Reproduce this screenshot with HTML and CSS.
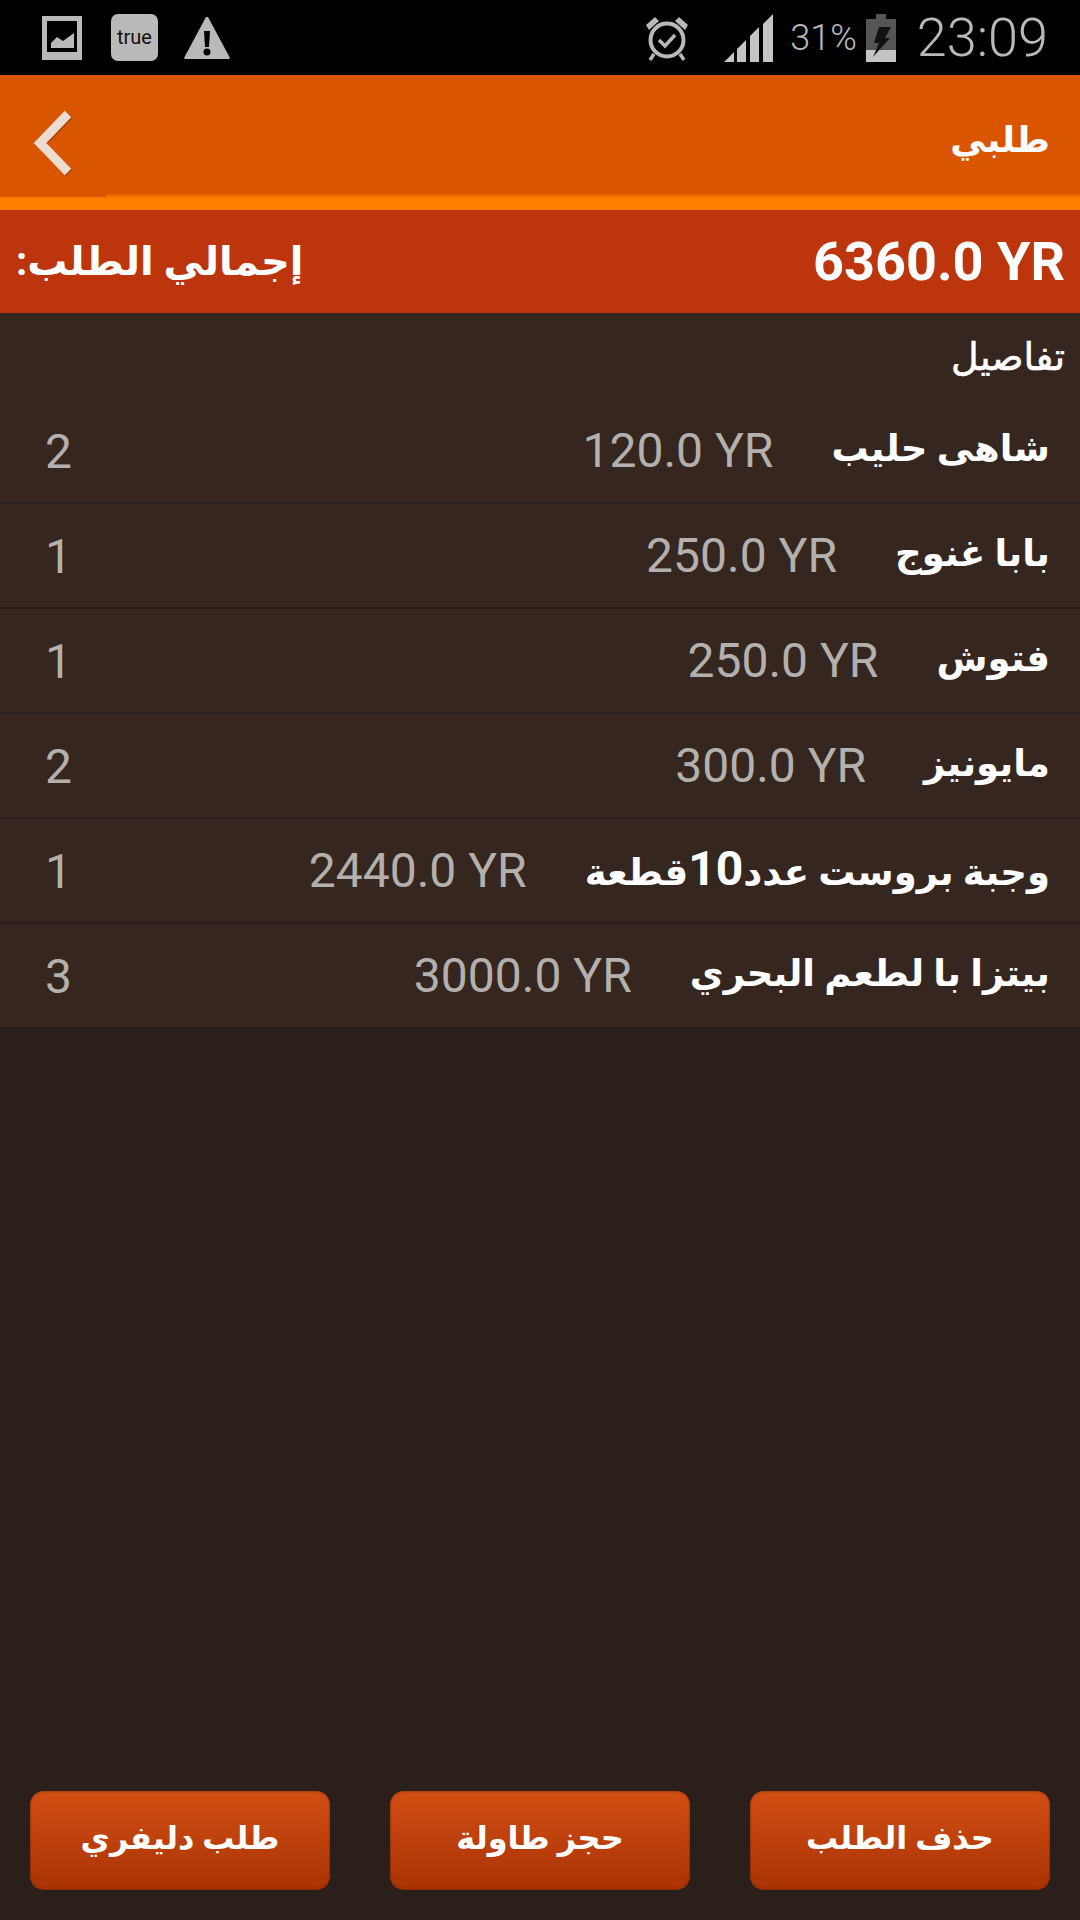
FILE: index.html
```html
<!DOCTYPE html>
<html lang="ar">
<head>
  <meta charset="UTF-8">
  <meta name="viewport" content="width=device-width, initial-scale=1.0">
  <title>طلبي</title>
  <link rel="stylesheet" href="styles.css">
</head>
<body>

  <div class="screen">
    <div class="status-bar">
      <div class="status-left">
        <svg class="icon-picture" width="40" height="44" viewBox="0 0 40 44">
          <path fill="#b9b9b9" fill-rule="evenodd" d="M0 0H40V44H0ZM5 5V36H35V5Z"/>
          <path fill="#b9b9b9" d="M9 32V27L15 21L21 25L32 17V32Z"/>
        </svg>
        <div class="true-badge">true</div>
        <svg class="icon-warning" width="48" height="44" viewBox="0 0 48 44">
          <path fill="#b9b9b9" d="M23 1H25L47 42L46 43H2L1 42Z"/>
          <path fill="#000" d="M21 15H27L26 31H22Z"/>
          <circle fill="#000" cx="24" cy="36" r="3.5"/>
        </svg>
      </div>
      <div class="status-right">
        <svg class="icon-alarm" width="46" height="48" viewBox="0 0 46 48">
          <circle cx="23" cy="26" r="16.5" fill="none" stroke="#b9b9b9" stroke-width="4"/>
          <path d="M15 26L21 32L31 21" fill="none" stroke="#b9b9b9" stroke-width="3.5"/>
          <path d="M2 11L11 3L15 7L5 16Z M44 11L35 3L31 7L41 16Z" fill="#b9b9b9"/>
          <path d="M10 40L6 46M36 40L40 46" stroke="#b9b9b9" stroke-width="3.5"/>
        </svg>
        <svg class="icon-signal" width="49" height="48" viewBox="0 0 49 48">
          <path fill="#c4c4c4" d="M0 48L10 38V48Z M13 35L22 26V48H13Z M26 22L35 13V48H26Z M39 10L49 0V48H39Z"/>
        </svg>
        <span class="battery-text">31%</span>
        <svg class="icon-battery" width="30" height="48" viewBox="0 0 30 48">
          <path fill="#555" d="M10 0H20V5H30V36H0V5H10Z"/>
          <path fill="#c4c4c4" d="M0 36H30V48H0Z"/>
          <path fill="#111" d="M13 13H25L19 24H24L7 43L13 29H8Z"/>
        </svg>
        <span class="clock">23:09</span>
      </div>
    </div>

    <div class="app-bar">
      <div class="back-btn">
        <svg width="40" height="66" viewBox="0 0 40 66">
          <path d="M34 4L6 33L34 62" fill="none" stroke="#a64200" stroke-width="9" transform="translate(1 1)"/>
          <path d="M34 4L6 33L34 62" fill="none" stroke="#efdcd0" stroke-width="9"/>
        </svg>
      </div>
      <div class="app-title">طلبي</div>
    </div>

    <div class="total-bar">
      <div class="total-label">إجمالي الطلب:</div>
      <div class="total-value">6360.0 YR</div>
    </div>

    <div class="details">
      <div class="details-title">تفاصيل</div>
      <div class="order-row">
        <span class="item-name">شاهى حليب</span>
        <span class="item-price">120.0 YR</span>
        <span class="item-qty">2</span>
      </div>
      <div class="order-row">
        <span class="item-name">بابا غنوج</span>
        <span class="item-price">250.0 YR</span>
        <span class="item-qty">1</span>
      </div>
      <div class="order-row">
        <span class="item-name">فتوش</span>
        <span class="item-price">250.0 YR</span>
        <span class="item-qty">1</span>
      </div>
      <div class="order-row">
        <span class="item-name">مايونيز</span>
        <span class="item-price">300.0 YR</span>
        <span class="item-qty">2</span>
      </div>
      <div class="order-row">
        <span class="item-name">وجبة بروست عدد<span class="item-digits">10</span>قطعة</span>
        <span class="item-price">2440.0 YR</span>
        <span class="item-qty">1</span>
      </div>
      <div class="order-row">
        <span class="item-name">بيتزا با لطعم البحري</span>
        <span class="item-price">3000.0 YR</span>
        <span class="item-qty">3</span>
      </div>
    </div>

    <div class="actions">
      <button class="action-btn">طلب دليفري</button>
      <button class="action-btn">حجز طاولة</button>
      <button class="action-btn">حذف الطلب</button>
    </div>
  </div>

</body>
</html>
```

FILE: styles.css
```css
* {
  box-sizing: border-box;
}

body {
  margin: 0;
  font-family: Roboto, "DejaVu Sans", sans-serif;
  background-color: #2b1f1b;
}

.screen {
  width: 1080px;
  height: 1920px;
  display: flex;
  flex-direction: column;
  overflow: hidden;
}

.status-bar {
  height: 75px;
  flex-shrink: 0;
  background-color: #000;
  display: flex;
  justify-content: space-between;
  align-items: center;
  padding: 0 32px 0 42px;
}

.status-left,
.status-right {
  display: flex;
  align-items: center;
}

.icon-picture {
  margin-right: 29px;
}

.true-badge {
  width: 47px;
  height: 47px;
  margin-right: 25px;
  border-radius: 7px;
  background-color: #b9b9b9;
  color: #111;
  font-size: 20px;
  line-height: 47px;
  text-align: center;
}

.icon-alarm {
  margin-right: 34px;
}

.battery-text {
  margin: 0 9px 0 17px;
  color: #b9b9b9;
  font-size: 36px;
  font-weight: 300;
}

.clock {
  margin-left: 21px;
  color: #b9b9b9;
  font-size: 54px;
  font-weight: 300;
}

.app-bar {
  position: relative;
  height: 135px;
  flex-shrink: 0;
  background: linear-gradient(to bottom, #da5500 0, #da5500 118px, #ff8000 123px, #ff8000 100%);
  display: flex;
  justify-content: space-between;
  padding: 0 30px 0 34px;
  align-items: center;
}

/* back button press area runs a bit lower than the bar */
.app-bar::before {
  content: "";
  position: absolute;
  left: 0;
  top: 118px;
  width: 106px;
  height: 4px;
  background-color: #da5500;
}

.back-btn {
  display: flex;
  align-items: center;
}

.app-title {
  padding-bottom: 6px;
  color: #fff;
  font-size: 36px;
  font-weight: bold;
}

.total-bar {
  direction: rtl;
  height: 103px;
  flex-shrink: 0;
  background-color: #bc350c;
  display: flex;
  flex-direction: row-reverse;
  justify-content: space-between;
  align-items: center;
  padding: 0 15px 0 16px;
  color: #fff;
  font-weight: bold;
}

.total-label {
  font-size: 40px;
}

.total-value {
  direction: ltr;
  font-size: 54px;
}

.details {
  direction: rtl;
  background-color: #35271f;
}

.details-title {
  height: 86px;
  padding: 22px 15px 0 0;
  color: #fff;
  font-size: 38px;
  -webkit-text-stroke: 0.6px #fff;
}

.order-row {
  height: 105px;
  display: flex;
  align-items: center;
  padding: 0 30px 0 45px;
  border-bottom: 2px solid #2b1f1b;
}

.order-row:last-child {
  height: 103px;
  border-bottom: none;
}

.item-name {
  margin-left: 58px;
  padding-bottom: 5px;
  color: #fff;
  font-size: 37px;
  font-weight: bold;
}

.item-digits {
  font-size: 48px;
}

.item-price {
  direction: ltr;
  color: #b3b0ad;
  font-size: 48px;
}

.item-qty {
  margin-right: auto;
  padding-top: 2px;
  color: #b3b0ad;
  font-size: 48px;
}

.actions {
  margin-top: auto;
  display: flex;
  justify-content: space-between;
  padding: 0 30px 30px;
}

.action-btn {
  width: 300px;
  height: 99px;
  padding-bottom: 6px;
  border: none;
  border-radius: 14px;
  background: linear-gradient(to bottom, #d24f14, #a93204);
  box-shadow: inset 0 0 3px #7a2a08;
  color: #fff;
  font-family: inherit;
  font-size: 32px;
  font-weight: bold;
}
```
